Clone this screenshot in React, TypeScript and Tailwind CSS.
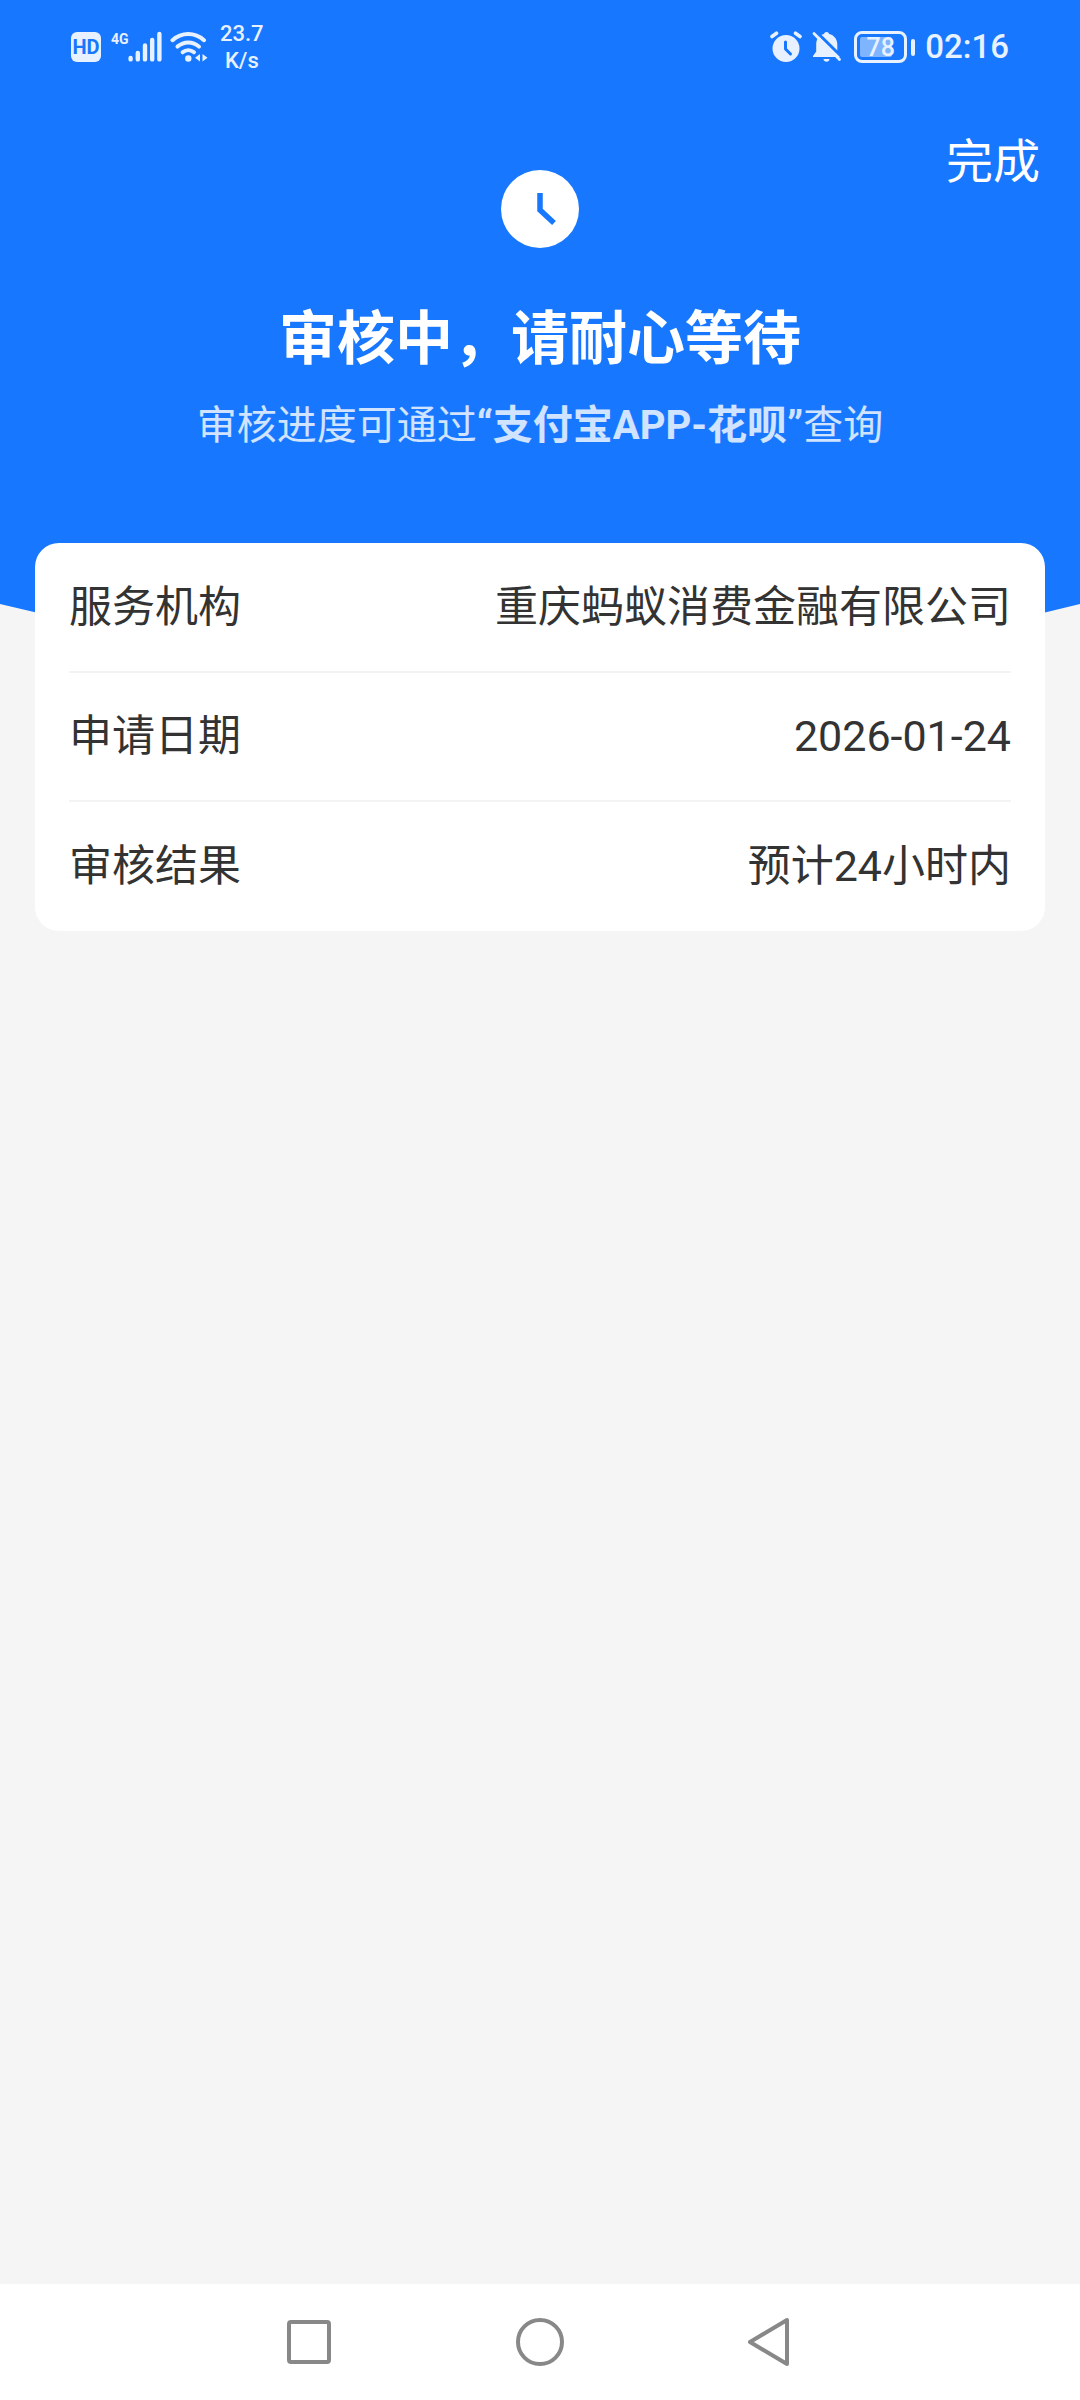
import type { ReactNode } from 'react';

const details = [
  { label: '服务机构', value: '重庆蚂蚁消费金融有限公司' },
  { label: '申请日期', value: '2026-01-24' },
  { label: '审核结果', value: '预计24小时内' },
];

function SignalIcon() {
  return (
    <svg width="34" height="32" viewBox="0 0 34 32" stroke="currentColor" strokeWidth="4.4" strokeLinecap="round">
      <path d="M2.6 27v1.4M9.8 22v6.4M17 14.5v13.9M24.2 9v19.4M31.4 3v25.4" />
    </svg>
  );
}

function WifiIcon() {
  return (
    <svg width="38" height="32" viewBox="0 0 38 32" fill="none" stroke="currentColor" strokeWidth="4" strokeLinecap="round">
      <path d="M2.5 9.2C11.5 1 25 1 34 9.2" />
      <path d="M7.5 15.6c6.2-5.6 15.4-5.6 21.5 0" />
      <path d="M12.6 21.3c3.4-2.9 8-2.9 11.4 0" />
      <circle cx="18.3" cy="27.5" r="3.2" fill="currentColor" stroke="none" />
      <path d="M30 23v7.5L25 26.7zM32.5 23v7.5l5-3.8z" fill="currentColor" stroke="none" />
    </svg>
  );
}

function AlarmIcon() {
  return (
    <svg width="32" height="32" viewBox="0 0 32 32" fill="none">
      <circle cx="16" cy="17.5" r="13.5" fill="currentColor" />
      <path d="M2 5.5L6.500 2.200M30 5.500L25.500 2.200" stroke="currentColor" strokeWidth="3.6" strokeLinecap="round" />
      <path d="M15.5 11v7l5 5" stroke="#1777ff" strokeWidth="3" strokeLinecap="round" strokeLinejoin="round" />
    </svg>
  );
}

function BellOffIcon() {
  return (
    <svg width="30" height="32" viewBox="0 0 30 32" fill="none">
      <path d="M14.5 1c1.5 0 2.3.8 2.6 2 5 1.2 8.2 5 8.2 10.5v7L29 25v1H1v-1l3.2-4.5v-7C4.2 8 7.1 4.2 12 3c.3-1.2 1-2 2.5-2z" fill="currentColor" />
      <path d="M11.5 28h6c0 3.5-6 3.5-6 0z" fill="currentColor" />
      <path d="M3.5 0L31 27" stroke="#1777ff" strokeWidth="3" />
      <path d="M2 2.5L27.5 28.5" stroke="currentColor" strokeWidth="2.8" strokeLinecap="round" />
    </svg>
  );
}

function Battery({ level }: { level: number }) {
  return (
    <div className="flex items-center gap-1">
      <div className="flex h-8 w-[53px] rounded-lg border-3 border-current p-[3px]">
        <div className="relative flex w-full items-center justify-center">
          <span className="absolute inset-y-0 left-0 rounded-xs bg-white/45" style={{ width: `${level}%` }} />
          <span className="relative text-[25px] leading-none font-medium">{level}</span>
        </div>
      </div>
      <span className="h-[17px] w-1 rounded-full bg-current" />
    </div>
  );
}

function StatusBar() {
  return (
    <div className="flex h-[94px] items-center justify-between px-[71px] text-[#e8f1ff]">
      <div className="flex items-center">
        <span className="flex h-[30px] w-[30px] items-center justify-center rounded-md bg-[#e8f1ff] text-[20px] font-bold text-[#1777ff]">
          HD
        </span>
        <span className="mr-px ml-2.5 -mt-4 w-4 font-['Liberation_Sans_Narrow','Roboto',sans-serif] text-[14px] leading-4 font-bold">
          4G
        </span>
        <SignalIcon />
        <span className="ml-2">
          <WifiIcon />
        </span>
        <span className="ml-3 text-center text-[22px] leading-[27px] font-medium">
          23.7
          <br />
          K/s
        </span>
      </div>
      <div className="flex items-center">
        <AlarmIcon />
        <span className="ml-2.5">
          <BellOffIcon />
        </span>
        <span className="ml-3">
          <Battery level={78} />
        </span>
        <span className="ml-2.5 text-[33px] leading-10 font-medium">02:16</span>
      </div>
    </div>
  );
}

function NavButton({ label, children }: { label: string; children: ReactNode }) {
  return (
    <button type="button" aria-label={label} className="flex h-full w-[230px] items-center justify-center">
      <svg width="50" height="50" viewBox="0 0 50 50" fill="none" stroke="#888" strokeWidth="4" strokeLinejoin="round">
        {children}
      </svg>
    </button>
  );
}

export default function App() {
  return (
    <div
      lang="zh-CN"
      className="flex min-h-screen flex-col bg-[#f5f5f5] font-['Roboto','Noto_Sans_CJK_SC',sans-serif] text-[#333]"
    >
      <header className="relative bg-[#1777ff] pb-[148px] text-white">
        <StatusBar />
        <div className="grid grid-cols-3 items-start">
          <svg className="col-start-2 mt-[76px] justify-self-center" width="78" height="78" viewBox="0 0 78 78" fill="none">
            <circle cx="39" cy="39" r="39" fill="#fff" />
            <path d="M39 23v17l14 13" stroke="#1777ff" strokeWidth="5.5" />
          </svg>
          <button type="button" className="mt-[43px] mr-10 justify-self-end text-[47px] leading-[50px]">
            完成
          </button>
        </div>
        <h1 className="mt-[51px] text-center text-[58px] leading-[80px] font-bold">审核中，请耐心等待</h1>
        <p className="mt-[17px] text-center text-[40px] leading-[60px] text-white/80">
          审核进度可通过<strong>“支付宝APP-花呗”</strong>查询
        </p>
        <svg className="absolute top-full left-0 h-[68px] w-full" viewBox="0 0 1080 68" preserveAspectRatio="none">
          <path d="M0 0Q540 135 1080 0z" fill="#1777ff" />
        </svg>
      </header>

      <main className="relative -mt-[61px] px-[35px]">
        <dl className="rounded-3xl bg-white px-[34px] pt-px text-[43px]">
          {details.map((item) => (
            <div
              key={item.label}
              className="flex h-[129px] items-center justify-between border-b-2 border-[#f3f3f3] last:border-b-0"
            >
              <dt>{item.label}</dt>
              <dd>{item.value}</dd>
            </div>
          ))}
        </dl>
      </main>

      <nav className="mt-auto flex h-[116px] items-center justify-center bg-white">
        <NavButton label="最近任务">
          <rect x="4" y="5" width="40" height="40" rx="2" />
        </NavButton>
        <NavButton label="主页">
          <circle cx="25" cy="25" r="22" />
        </NavButton>
        <NavButton label="返回">
          <path d="M5 25L42 3V47z" />
        </NavButton>
      </nav>
    </div>
  );
}
